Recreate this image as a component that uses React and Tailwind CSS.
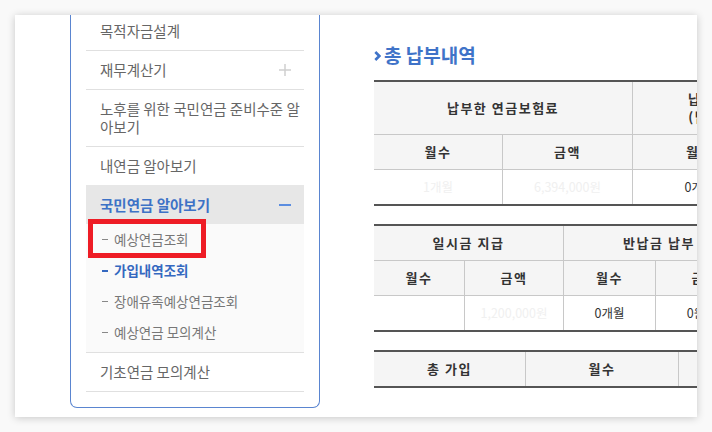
import React from 'react';

const FONT = { fontFamily: '"Noto Sans CJK KR", "Noto Sans", sans-serif' };

const Plus = () => (
    <svg width="12" height="12" viewBox="0 0 12 12" className="shrink-0">
        <path d="M6 0v12M0 6h12" stroke="#d0d0d0" strokeWidth="1.5" />
    </svg>
);

const Minus = () => <span className="block w-[12px] h-[2px] bg-[#5b8de0] shrink-0" />;

const SubItem = ({ label, active, marked }) => (
    <div className="relative h-[31px] flex items-center pl-[16px]">
        <span className={active ? 'w-[6px] h-[2px] bg-[#3468c0] mr-[6px]' : 'w-[6px] h-[1px] bg-[#888] mr-[6px]'} />
        <span className={active ? 'text-[13.5px] font-bold text-[#3468c0]' : 'text-[13.5px] text-[#777]'}>{label}</span>
        {marked && (
            <div className="absolute left-[2px] top-[-5px] w-[118px] h-[39px] border-[5px] border-[#ee1c25]" />
        )}
    </div>
);

const Sidebar = () => (
    <div className="ml-[55px] w-[250px] h-[393px] shrink-0 border border-t-0 border-[#5a85d0] rounded-b-[7px] px-[15px] pb-[15px] text-[14.5px] text-[#666]">
        <div className="h-[36px] pb-[3px] pl-[14px] flex items-center border-b border-[#e0e0e0]">목적자금설계</div>
        <div className="h-[39px] pl-[14px] pr-[13px] flex items-center justify-between border-b border-[#e0e0e0]">
            <span>재무계산기</span>
            <Plus />
        </div>
        <div className="h-[57px] pl-[14px] flex items-center border-b border-[#e0e0e0] leading-[18px]">
            노후를 위한 국민연금 준비수준 알아보기
        </div>
        <div className="h-[38px] pl-[14px] flex items-center">내연금 알아보기</div>
        <div className="h-[39px] pl-[14px] pr-[13px] flex items-center justify-between bg-[#e7e7e7] font-semibold text-[#3d72c6]">
            <span>국민연금 알아보기</span>
            <Minus />
        </div>
        <div className="bg-[#fafafa] pb-[4px] border-b border-[#e0e0e0]">
            <SubItem label="예상연금조회" marked />
            <SubItem label="가입내역조회" active />
            <SubItem label="장애유족예상연금조회" />
            <SubItem label="예상연금 모의계산" />
        </div>
        <div className="h-[39px] pl-[14px] flex items-center border-b border-[#e0e0e0]">기초연금 모의계산</div>
    </div>
);

const Th = ({ w, last, children, className = '' }) => (
    <div
        className={`${w} h-full shrink-0 flex flex-col items-center justify-center text-[13px] font-bold tracking-[1.5px] text-[#333] leading-[18px] whitespace-nowrap ${last ? '' : 'border-r border-[#c8c8c8]'} ${className}`}
    >
        {children}
    </div>
);

const Td = ({ w, last, faint, children, className = '' }) => (
    <div
        className={`${w} h-full shrink-0 flex items-center justify-center text-[12.5px] whitespace-nowrap ${faint ? 'text-[#f0f0f0]' : 'text-[#333]'} ${last ? '' : 'border-r border-[#c8c8c8]'} ${className}`}
    >
        {children}
    </div>
);

const Content = () => (
    <div className="ml-[54px] flex-1 min-w-0">
        <h2 className="mt-[28px] h-[24px] flex items-center gap-[3px] text-[19px] font-bold text-[#3f73c8]">
            <svg width="7" height="10" viewBox="0 0 7 10" className="mt-[1px]">
                <path d="M1.3 1 5.3 5 1.3 9" fill="none" stroke="#3f73c8" strokeWidth="2.6" />
            </svg>
            <span>총 납부내역</span>
        </h2>

        {/* 납부내역 */}
        <div className="mt-[13px] w-[526px] border-t-2 border-b-2 border-[#555]">
            <div className="flex h-[53px] bg-[#f5f5f5] border-b border-[#c8c8c8]">
                <Th w="w-[259px]">납부한 연금보험료</Th>
                <Th w="w-[267px]" last>
                    <span>납부예외기간 중 추후납부</span>
                    <span>(납부재개 후 추납보험료)</span>
                </Th>
            </div>
            <div className="flex h-[35px] bg-[#f5f5f5] border-b border-[#c8c8c8]">
                <Th w="w-[129px]">월수</Th>
                <Th w="w-[130px]">금액</Th>
                <Th w="w-[134px]">월수</Th>
                <Th w="w-[133px]" last>금액</Th>
            </div>
            <div className="flex h-[34px]">
                <Td w="w-[129px]" faint>1개월</Td>
                <Td w="w-[130px]" faint>6,394,000원</Td>
                <Td w="w-[134px]">0개월</Td>
                <Td w="w-[133px]" last>0원</Td>
            </div>
        </div>

        {/* 일시금 / 반납금 */}
        <div className="mt-[18px] w-[500px] border-t-2 border-b-2 border-[#555]">
            <div className="flex h-[35px] bg-[#f5f5f5] border-b border-[#c8c8c8]">
                <Th w="w-[190px]">일시금 지급</Th>
                <Th w="w-[191px]">반납금 납부</Th>
                <Th w="w-[119px]" last>추납</Th>
            </div>
            <div className="flex h-[35px] bg-[#f5f5f5] border-b border-[#c8c8c8]">
                <Th w="w-[91px]">월수</Th>
                <Th w="w-[99px]">금액</Th>
                <Th w="w-[92px]">월수</Th>
                <Th w="w-[99px]">금액</Th>
                <Th w="w-[119px]" last>월수</Th>
            </div>
            <div className="flex h-[34px]">
                <Td w="w-[91px]" faint></Td>
                <Td w="w-[99px]" faint>1,200,000원</Td>
                <Td w="w-[92px]">0개월</Td>
                <Td w="w-[99px]" className="pr-[18px]">0원</Td>
                <Td w="w-[119px]" last>0개월</Td>
            </div>
        </div>

        {/* 총 가입 */}
        <div className="mt-[18px] w-[460px] border-t-2 border-b-2 border-[#555]">
            <div className="flex h-[34px] bg-[#f5f5f5]">
                <Th w="w-[152px]">총 가입</Th>
                <Th w="w-[153px]">월수</Th>
                <Th w="w-[155px]" last>금액</Th>
            </div>
        </div>
    </div>
);

const App = () => {
    return (
        <div className="w-[712px] h-[432px] bg-[#f9f9f9] p-[15px]" style={FONT}>
            <div className="w-[682px] h-[402px] bg-white shadow-[0_1px_8px_rgba(0,0,0,0.2)] overflow-hidden flex">
                <Sidebar />
                <Content />
            </div>
        </div>
    );
};

export default App;
